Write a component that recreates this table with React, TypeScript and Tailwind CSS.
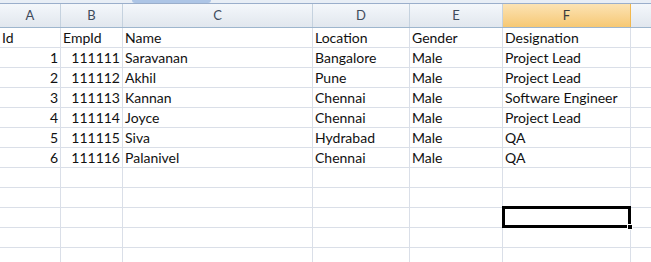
import React from "react"

const cols = [
  { key: "A", w: "w-[61px]" },
  { key: "B", w: "w-[62px]" },
  { key: "C", w: "w-[190px]" },
  { key: "D", w: "w-[97px]" },
  { key: "E", w: "w-[93px]" },
  { key: "F", w: "w-[128px]" },
]

type Cell = { v: string; right?: boolean }

const rows: Cell[][] = [
  [{ v: "Id" }, { v: "EmpId" }, { v: "Name" }, { v: "Location" }, { v: "Gender" }, { v: "Designation" }],
  [{ v: "1", right: true }, { v: "111111", right: true }, { v: "Saravanan" }, { v: "Bangalore" }, { v: "Male" }, { v: "Project Lead" }],
  [{ v: "2", right: true }, { v: "111112", right: true }, { v: "Akhil" }, { v: "Pune" }, { v: "Male" }, { v: "Project Lead" }],
  [{ v: "3", right: true }, { v: "111113", right: true }, { v: "Kannan" }, { v: "Chennai" }, { v: "Male" }, { v: "Software Engineer" }],
  [{ v: "4", right: true }, { v: "111114", right: true }, { v: "Joyce" }, { v: "Chennai" }, { v: "Male" }, { v: "Project Lead" }],
  [{ v: "5", right: true }, { v: "111115", right: true }, { v: "Siva" }, { v: "Hydrabad" }, { v: "Male" }, { v: "QA" }],
  [{ v: "6", right: true }, { v: "111116", right: true }, { v: "Palanivel" }, { v: "Chennai" }, { v: "Male" }, { v: "QA" }],
]

const TOTAL_ROWS = 12
const SELECTED = { row: 9, col: 5 }

export default function App() {
  const body: Cell[][] = Array.from({ length: TOTAL_ROWS }, (_, i) => rows[i] ?? cols.map(() => ({ v: "" })))

  return (
    <div className="h-[262px] w-[651px] overflow-hidden bg-white font-['Lato',sans-serif] text-[14px] text-[#111]">
      {/* ribbon edge */}
      <div className="relative h-[4px] border-b border-[#9aaecb] bg-[#e8eef6]">
        <div className="absolute left-[132px] top-0 h-[3px] w-[79px] rounded-b-[3px] bg-[#adc5e6]" />
      </div>

      {/* column headers */}
      <div className="flex h-[24px] border-b border-[#9eb6ce]">
        {cols.map((c) => (
          <div
            key={c.key}
            className={`${c.w} flex shrink-0 items-center justify-center border-r text-[13px] ${
              c.key === "F"
                ? "border-[#f2b84d] bg-gradient-to-b from-[#fce3b3] to-[#f6c873] text-[#3b3b3b]"
                : "border-[#c5d2df] bg-gradient-to-b from-[#f4f7fb] to-[#e1e7ee] text-[#3f4b5b]"
            }`}
          >
            {c.key}
          </div>
        ))}
        <div className="flex-1 bg-gradient-to-b from-[#f4f7fb] to-[#e1e7ee]" />
      </div>

      {/* grid */}
      {body.map((r, ri) => (
        <div key={ri} className="flex h-[20px] border-b border-[#dadfe8]">
          {cols.map((c, ci) => (
            <div
              key={c.key}
              className={`${c.w} relative flex shrink-0 items-center border-r border-[#dadfe8] px-[2px] leading-none ${
                r[ci].right ? "justify-end" : "justify-start"
              } ${ri === SELECTED.row && ci === SELECTED.col ? "z-10" : ""}`}
            >
              <span className="whitespace-nowrap">{r[ci].v}</span>
              {ri === SELECTED.row && ci === SELECTED.col && (
                <div className="absolute -left-[1px] -top-[2px] h-[22px] w-[129px] border-[3px] border-black">
                  <div className="absolute -bottom-[5px] -right-[5px] h-[6px] w-[6px] border border-white bg-black" />
                </div>
              )}
            </div>
          ))}
          <div className="flex-1" />
        </div>
      ))}
    </div>
  )
}
